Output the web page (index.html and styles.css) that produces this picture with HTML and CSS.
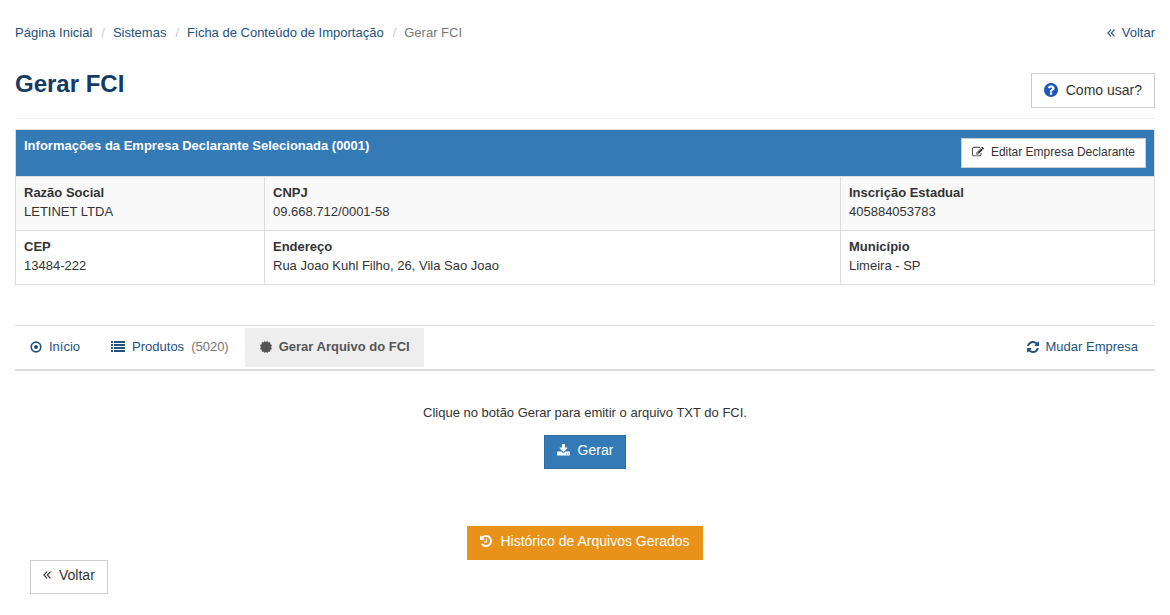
FILE: index.html
```html
<!DOCTYPE html>
<html lang="pt-BR">
<head>
<meta charset="utf-8">
<meta name="viewport" content="width=device-width, initial-scale=1">
<title>Gerar FCI</title>
<link rel="stylesheet" href="styles.css">
</head>
<body>
<svg class="sprite" aria-hidden="true">
  <symbol id="i-back" viewBox="0 0 8 14"><path d="M4.100 3.600.900 7l3.200 3.400M7.500 3.600 4.300 7l3.200 3.400" fill="none" stroke="currentColor" stroke-width="1.100"/></symbol>
  <symbol id="i-help" viewBox="128 128 1536 1536"><path d="M1024 1376v-192q0-14-9-23t-23-9h-192q-14 0-23 9t-9 23v192q0 14 9 23t23 9h192q14 0 23-9t9-23zm256-672q0-88-55.5-163t-138.5-116-170-41q-243 0-371 213-15 24 8 42l132 100q7 6 19 6 16 0 25-12 53-68 86-92 34-24 86-24 48 0 85.5 26t37.5 59q0 38-20 61t-68 45q-63 28-115.5 86.5t-52.5 125.5v36q0 14 9 23t23 9h192q14 0 23-9t9-23q0-19 21.5-49.5t54.5-49.5q32-18 49-28.5t46-35 44.5-48 28-60.5 12.5-81zm384 192q0 209-103 385.5t-279.5 279.5-385.5 103-385.5-103-279.5-279.5-103-385.5 103-385.5 279.5-279.5 385.5-103 385.5 103 279.5 279.5 103 385.5z"/></symbol>
  <symbol id="i-edit" viewBox="0 0 1792 1792"><path d="M888 1184l116-116-152-152-116 116v56h96v96h56zm440-720q-16-16-33 1l-350 350q-17 17-1 33t33-1l350-350q17-17 1-33zm80 594v190q0 119-84.5 203.5t-203.5 84.5h-832q-119 0-203.5-84.5t-84.5-203.5v-832q0-119 84.5-203.5t203.5-84.5h832q63 0 117 25 15 7 18 23 3 17-9 29l-49 49q-14 14-32 8-23-6-45-6h-832q-66 0-113 47t-47 113v832q0 66 47 113t113 47h832q66 0 113-47t47-113v-126q0-13 9-22l64-64q15-15 35-7t20 29zm-96-738l288 288-672 672h-288v-288zm444 132l-92 92-288-288 92-92q28-28 68-28t68 28l152 152q28 28 28 68t-28 68z"/></symbol>
  <symbol id="i-dot" viewBox="0 0 12 12"><circle cx="6" cy="6" r="4.800" fill="none" stroke="currentColor" stroke-width="1.700"/><circle cx="6" cy="6" r="2"/></symbol>
  <symbol id="i-list" viewBox="0 0 14 14"><path d="M0 1h2v2H0zM3 1h11v2H3zM0 4h2v2H0zM3 4h11v2H3zM0 7h2v2H0zM3 7h11v2H3zM0 10h2v2H0zM3 10h11v2H3z"/></symbol>
  <symbol id="i-burst" viewBox="1 1 12 12"><path d="M7 2 8.400 1 9.200 2.300 11.200 2.200 11.300 4.300 13 5 12.100 7 13 9 11.300 9.700 11.200 11.800 9.200 11.700 8.400 13 7 12 5.600 13 4.800 11.700 2.800 11.800 2.700 9.700 1 9 1.900 7 1 5 2.700 4.300 2.800 2.200 4.800 2.300 5.600 1z"/></symbol>
  <symbol id="i-refresh" viewBox="128 128 1536 1536"><path d="M1639 1056q0 5-1 7-64 268-268 434.500t-478 166.500q-146 0-282.500-55t-243.500-157l-129 129q-19 19-45 19t-45-19-19-45v-448q0-26 19-45t45-19h448q26 0 45 19t19 45-19 45l-137 137q71 66 161 102t187 36q134 0 250-65t186-179q11-17 53-117 8-23 30-23h192q13 0 22.500 9.500t9.500 22.500zm25-800v448q0 26-19 45t-45 19h-448q-26 0-45-19t-19-45 19-45l138-138q-148-137-349-137-134 0-250 65t-186 179q-11 17-53 117-8 23-30 23h-199q-13 0-22.500-9.500t-9.500-22.500v-7q65-268 270-434.500t480-166.500q146 0 284 55.500t245 156.500l130-129q19-19 45-19t45 19 19 45z"/></symbol>
  <symbol id="i-download" viewBox="64 64 1664 1664"><path d="M1344 1344q0-26-19-45t-45-19-45 19-19 45 19 45 45 19 45-19 19-45zm256 0q0-26-19-45t-45-19-45 19-19 45 19 45 45 19 45-19 19-45zm128-224v320q0 40-28 68t-68 28h-1472q-40 0-68-28t-28-68v-320q0-40 28-68t68-28h465l135 136q58 56 136 56t136-56l136-136h464q40 0 68 28t28 68zm-325-569q17 41-14 70l-448 448q-18 19-45 19t-45-19l-448-448q-31-29-14-70 17-39 59-39h256v-448q0-26 19-45t45-19h256q26 0 45 19t19 45v448h256q42 0 59 39z"/></symbol>
  <symbol id="i-history" viewBox="128 128 1536 1536"><path d="M1664 896q0 156-61 298t-164 245-245 164-298 61q-172 0-327-72.500t-264-204.500q-7-10-6.500-22.500t8.500-20.500l137-138q10-9 25-9 16 2 23 12 73 95 179 147t225 52q104 0 198.500-40.500t163.500-109.500 109.500-163.500 40.500-198.500-40.500-198.500-109.500-163.500-163.500-109.500-198.500-40.500q-98 0-188 35.500t-160 101.500l137 138q31 30 14 69-17 40-59 40h-448q-26 0-45-19t-19-45v-448q0-42 40-59 39-17 69 14l130 129q107-101 244.500-156.500t284.500-55.500q156 0 298 61t245 164 164 245 61 298zm-640-288v448q0 14-9 23t-23 9h-320q-14 0-23-9t-9-23v-64q0-14 9-23t23-9h224v-352q0-14 9-23t23-9h64q14 0 23 9t9 23z"/></symbol>
</svg>
<div class="page">
  <nav class="topbar" aria-label="Navegação">
    <ol class="breadcrumb">
      <li><a href="#">Página Inicial</a></li>
      <li><a href="#">Sistemas</a></li>
      <li><a href="#">Ficha de Conteúdo de Importação</a></li>
      <li>Gerar FCI</li>
    </ol>
    <a class="icon-link" href="#"><svg class="icon icon-back"><use href="#i-back"/></svg>Voltar</a>
  </nav>
  <header class="heading">
    <h1>Gerar FCI</h1>
    <button class="btn btn-help" type="button"><svg class="icon icon-help"><use href="#i-help"/></svg>Como usar?</button>
  </header>
  <table class="company">
    <colgroup><col class="col-a"><col class="col-b"><col class="col-c"></colgroup>
    <thead>
      <tr><th colspan="3"><div class="company-head"><span>Informações da Empresa Declarante Selecionada (0001)</span><button class="btn btn-small" type="button"><svg class="icon icon-sm"><use href="#i-edit"/></svg>Editar Empresa Declarante</button></div></th></tr>
    </thead>
    <tbody>
      <tr>
        <td><strong>Razão Social</strong>LETINET LTDA</td>
        <td><strong>CNPJ</strong>09.668.712/0001-58</td>
        <td><strong>Inscrição Estadual</strong>405884053783</td>
      </tr>
      <tr>
        <td><strong>CEP</strong>13484-222</td>
        <td><strong>Endereço</strong>Rua Joao Kuhl Filho, 26, Vila Sao Joao</td>
        <td><strong>Município</strong>Limeira - SP</td>
      </tr>
    </tbody>
  </table>
  <nav class="tabs" aria-label="FCI">
    <a class="tab" href="#"><svg class="icon icon-sm"><use href="#i-dot"/></svg>Início</a>
    <a class="tab" href="#"><svg class="icon"><use href="#i-list"/></svg>Produtos <span class="count">(5020)</span></a>
    <a class="tab active" href="#" aria-current="page"><svg class="icon icon-sm"><use href="#i-burst"/></svg>Gerar Arquivo do FCI</a>
    <a class="tab last" href="#"><svg class="icon icon-sm"><use href="#i-refresh"/></svg>Mudar Empresa</a>
  </nav>
  <main class="content">
    <p>Clique no botão Gerar para emitir o arquivo TXT do FCI.</p>
    <button class="btn btn-primary" type="button"><svg class="icon icon-md"><use href="#i-download"/></svg>Gerar</button>
    <button class="btn btn-history" type="button"><svg class="icon icon-sm"><use href="#i-history"/></svg>Histórico de Arquivos Gerados</button>
  </main>
  <footer class="bottom">
    <a class="btn" href="#"><svg class="icon icon-back"><use href="#i-back"/></svg>Voltar</a>
  </footer>
</div>
</body>
</html>
```
FILE: styles.css
```css
* { box-sizing: border-box; }
body {
  margin: 0;
  background: #fff;
  color: #333;
  font: 13px/19px "Liberation Sans", Arial, sans-serif;
}
a { color: #23527c; text-decoration: none; }
.sprite { display: none; }
.icon { width: 14px; height: 14px; flex: none; fill: currentColor; }
.icon-sm { width: 12px; height: 12px; }
.icon-md { width: 13px; height: 13px; }
.icon-back { width: 8px; }
.page { padding: 23px 15px; }

.topbar { display: flex; justify-content: space-between; }
.breadcrumb { display: flex; margin: 0; padding: 0; list-style: none; color: #777; }
.breadcrumb li + li::before { content: "/"; padding: 0 8px 0 9px; color: #ccc; }
.icon-link { display: flex; align-items: center; gap: 7px; }

.heading {
  display: flex;
  justify-content: space-between;
  align-items: flex-start;
  margin-bottom: 10px;
  padding: 30px 0 10px;
  border-bottom: 1px solid #eee;
}
h1 { margin: 0; font-size: 24px; line-height: 24px; color: #143b66; }

.btn {
  display: inline-flex;
  align-items: center;
  gap: 8px;
  padding: 4px 12px 8px;
  border: 1px solid #ccc;
  background: #fff;
  color: #333;
  font: 14px/20px "Liberation Sans", Arial, sans-serif;
  cursor: pointer;
}
.btn-help { margin-top: 1px; padding: 6px 12px 7px; }
.icon-help { color: #1b58b8; }
.btn-small { gap: 7px; padding: 4px 10px 6px; font-size: 12px; line-height: 18px; }

.company { width: 100%; border-collapse: collapse; table-layout: fixed; }
.col-a { width: 249px; }
.col-c { width: 314px; }
.company th, .company td { border: 1px solid #ddd; text-align: left; vertical-align: top; }
.company th { padding: 6px 8px 8px; background: #337ab7; color: #fff; }
.company td { padding: 6px 8px 9px; }
.company tbody tr:first-child { background: #f9f9f9; }
.company strong { display: block; }
.company-head { display: flex; justify-content: space-between; align-items: flex-start; }
.company-head .btn { margin-top: 2px; }

.tabs {
  display: flex;
  gap: 2px;
  margin-top: 40px;
  padding: 2px 3px 2px 0;
  border-top: 1px solid #ddd;
  border-bottom: 2px solid #ddd;
}
.tab { display: flex; align-items: center; gap: 7px; padding: 9px 14px 11px 15px; }
.tab.active { background: #eee; color: #555; font-weight: bold; }
.tab.last { margin-left: auto; }
.count { color: #777; }

.content { display: flex; flex-direction: column; align-items: center; padding-top: 32px; }
.content p { margin: 0 0 13px; }
.btn-primary { border-color: #2e6da4; background: #337ab7; color: #fff; }
.btn-history { margin-top: 57px; border-color: #e8921a; background: #e8921a; color: #fff; }
.bottom { padding-left: 15px; }
```
